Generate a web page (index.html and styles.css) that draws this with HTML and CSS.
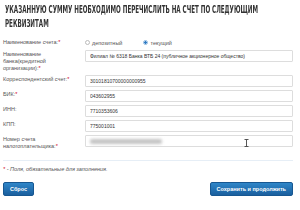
FILE: index.html
```html
<!DOCTYPE html>
<html lang="ru">
<head>
    <meta charset="UTF-8">
    <title>Реквизиты</title>
    <link rel="stylesheet" href="styles.css">
</head>
<body>
    <div class="container">
        <div class="title-wrap">
            <h1>Указанную сумму необходимо перечислить на счет по следующим реквизитам</h1>
        </div>
        <form class="requisites">
            <div class="form-row radio-row">
                <label>Наименование счета:<span class="req">*</span></label>
                <div class="radios">
                    <label class="radio"><span class="dot"></span>депозитный</label>
                    <label class="radio"><span class="dot checked"></span>текущий</label>
                </div>
            </div>
            <div class="form-row">
                <label for="bank">Наименование банка(кредитной организации):<span class="req">*</span></label>
                <input type="text" id="bank" value="Филиал № 6318 Банка ВТБ 24 (публичное акционерное общество)">
            </div>
            <div class="form-row">
                <label for="corr">Корреспондентский счет:<span class="req">*</span></label>
                <input type="text" id="corr" value="30101810700000000955">
            </div>
            <div class="form-row">
                <label for="bik">БИК:<span class="req">*</span></label>
                <input type="text" id="bik" value="043602955">
            </div>
            <div class="form-row">
                <label for="inn">ИНН:</label>
                <input type="text" id="inn" value="7710353606">
            </div>
            <div class="form-row">
                <label for="kpp">КПП:</label>
                <input type="text" id="kpp" value="775001001">
            </div>
            <div class="form-row">
                <label for="acc">Номер счета налогоплательщика:<span class="req">*</span></label>
                <div class="fake-input">
                    <span class="blurred"></span>
                    <svg class="ibeam" width="5" height="8" viewBox="0 0 5 8">
                        <path d="M0.5 0.5h4M2.5 0.5v7M0.5 7.5h4" stroke="#444" stroke-width="0.9" fill="none"/>
                    </svg>
                </div>
            </div>
            <hr>
            <p class="note"><span class="req">*</span> - Поля, обязательные для заполнения.</p>
            <div class="buttons">
                <button type="reset">Сброс</button>
                <button type="submit">Сохранить и продолжить</button>
            </div>
        </form>
    </div>
</body>
</html>
```

FILE: styles.css
```css
body {
    font-family: "Liberation Sans", Arial, sans-serif;
    background: #fff;
    color: #555;
    margin: 0;
    padding: 0;
}

.container {
    width: 300px;
    padding: 3px 7px 0 3px;
    box-sizing: border-box;
    overflow: hidden;
}

.title-wrap {
    height: 28px;
    margin: 0 0 8px 2px;
}

/* the original heading font is a narrow display face, squeeze the condensed one */
h1 {
    font-family: "DejaVu Sans Condensed", "Liberation Sans", sans-serif;
    font-stretch: condensed;
    font-weight: bold;
    font-size: 10px;
    line-height: 14px;
    text-transform: uppercase;
    color: #333;
    margin: 0;
    width: 425px;
    transform: scaleX(0.62);
    transform-origin: 0 0;
}

.form-row {
    display: grid;
    grid-template-columns: 82px 1fr;
    margin-bottom: 3px;
}

.form-row > label {
    font-size: 5.5px;
    line-height: 7px;
    padding-top: 1px;
    padding-right: 6px;
}

.radio-row > label {
    padding-top: 0;
}

.req {
    color: #d0021b;
}

.radio-row {
    margin-bottom: 4px;
}

.radios {
    display: flex;
    gap: 21px;
    font-size: 5.5px;
    align-items: center;
}

.radio {
    display: flex;
    align-items: center;
    gap: 2px;
}

.dot {
    width: 5px;
    height: 5px;
    border: 1px solid #bbb;
    border-radius: 50%;
    box-sizing: border-box;
    background: #fff;
}

.dot.checked {
    border-color: #8fb8df;
    background: radial-gradient(circle, #2f7cc4 0 1.2px, #fff 1.5px);
}

input[type="text"],
.fake-input {
    height: 12px;
    border: 1px solid #ddd;
    border-radius: 1px;
    padding: 0 4px;
    font-family: "Liberation Sans", Arial, sans-serif;
    font-size: 5px;
    color: #333;
    background: #fff;
    box-sizing: border-box;
    width: 100%;
    outline: none;
}

.fake-input {
    display: flex;
    align-items: center;
    position: relative;
}

.blurred {
    width: 72px;
    height: 5px;
    background: #c4c4c4;
    border-radius: 2px;
    filter: blur(1.5px);
}

.ibeam {
    position: absolute;
    left: 158px;
    top: 3px;
}

hr {
    border: none;
    border-top: 1px solid #e6eef6;
    margin: 10px 0 5px 0;
}

.note {
    font-size: 5.5px;
    font-style: italic;
    margin: 0 0 10px 0;
}

.buttons {
    display: flex;
    justify-content: space-between;
}

button {
    font-family: "Liberation Sans", Arial, sans-serif;
    font-size: 5.5px;
    font-weight: bold;
    color: #fff;
    background: linear-gradient(#2f86c8, #1a5f9e);
    border: 1px solid #175791;
    border-radius: 2px;
    height: 14px;
    padding: 0 6px;
    cursor: pointer;
}
```
